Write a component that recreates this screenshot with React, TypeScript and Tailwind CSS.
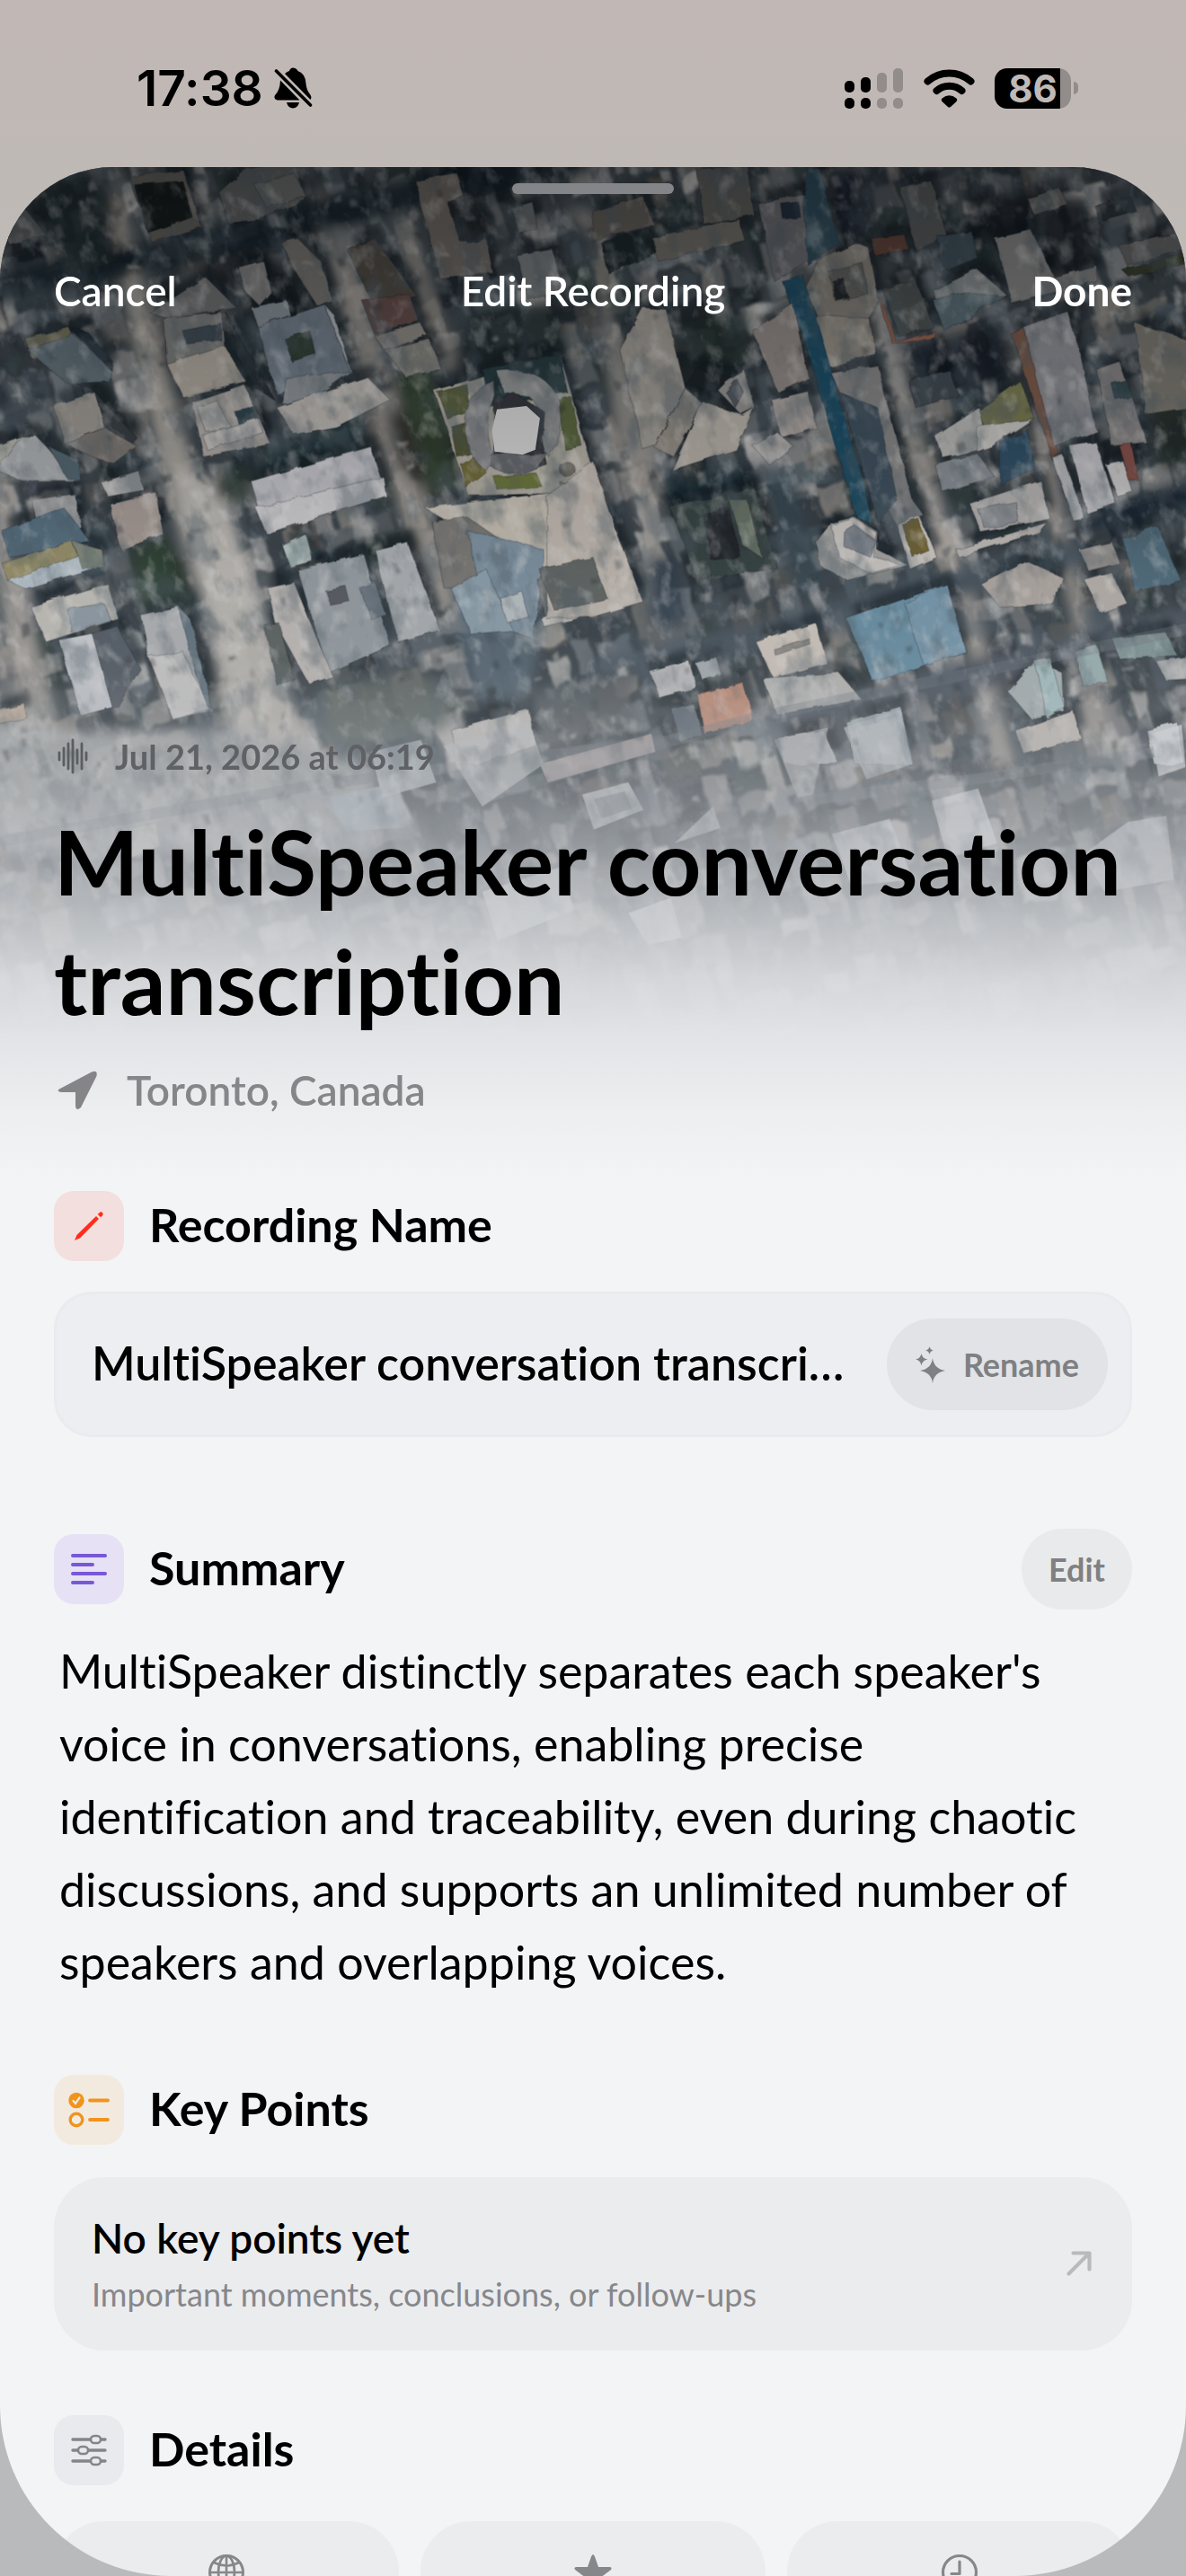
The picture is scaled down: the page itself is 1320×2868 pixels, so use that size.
import type { ReactNode } from "react";
import { GoArrowUpRight } from "react-icons/go";

/* ---------- Satellite map drawing ---------- */

function makeRandom(seed: number) {
  let s = seed;
  return () => {
    s = (s * 1664525 + 1013904223) % 4294967296;
    return s / 4294967296;
  };
}

type Block = { x: number; y: number; w: number; h: number; fill: string; o: number };

const tones = [
  "#7f8081", "#9a9896", "#666b6f", "#454e55", "#262e34", "#1a2228", "#aeacaa",
  "#8c8781", "#4c5962", "#343d43", "#727a81", "#bab7b5", "#5c5751", "#2c3838",
];

function makeBlocks(): Block[] {
  const rnd = makeRandom(77);
  const out: Block[] = [];
  for (let y = -200; y < 1650; y += 34) {
    for (let x = -500; x < 1500; x += 34) {
      const tall = rnd() > 0.45;
      out.push({
        x: Math.round(x + rnd() * 18),
        y: Math.round(y + rnd() * 18),
        w: Math.round(tall ? 10 + rnd() * 26 : 22 + rnd() * 36),
        h: Math.round(tall ? 28 + rnd() * 44 : 14 + rnd() * 24),
        fill: tones[Math.floor(rnd() * tones.length)],
        o: Math.round((0.4 + rnd() * 0.5) * 100) / 100,
      });
    }
  }
  return out;
}

function makeSpecks(seed: number, count: number, size: number): Block[] {
  const rnd = makeRandom(seed);
  const out: Block[] = [];
  for (let i = 0; i < count; i++) {
    out.push({
      x: Math.round(-500 + rnd() * 2000),
      y: Math.round(-200 + rnd() * 1850),
      w: Math.round(3 + rnd() * size),
      h: Math.round(3 + rnd() * size * 1.4),
      fill: rnd() > 0.5 ? "#cac8c6" : "#20282e",
      o: Math.round((0.15 + rnd() * 0.35) * 100) / 100,
    });
  }
  return out;
}

const blocks = makeBlocks();
const groundSpecks = makeSpecks(4242, 2200, 9);
const roofSpecks = makeSpecks(913, 1900, 7);

type Shape = [string, string];

/* Roads, shadows and parks that lie under the buildings. */
const groundLeft: Shape[] = [
  ["0,640 40,760 120,1240 200,1568 110,1568 30,1200 0,980", "#a8a39d"],
  ["330,20 400,300 480,620 560,900 640,1200 860,1568 640,1568 560,1180 470,900 390,560 320,200", "#aaa59e"],
  ["480,800 600,830 700,1140 780,1400 900,1568 640,1568 600,1300 520,980", "#c3beb8"],
  ["0,1440 200,1480 640,1480 1000,1568 1000,1800 0,1800", "#a9aaab"],
  ["860,60 960,300 1040,560 1140,900 1220,1160 1170,1180 1060,900 980,600 900,320 830,130", "#96918b"],
  ["1060,40 1180,420 1240,560 1190,560 1120,380 1040,130", "#807d78"],
  ["0,300 400,200 820,100 1568,-60 1568,20 900,180 400,290 0,370", "#16232c"],
  ["0,500 60,640 0,660", "#141e27"],
  ["100,110 230,30 320,60 330,260 200,300", "#1c252b"],
  ["560,280 640,230 760,260 860,380 700,400 640,420", "#1a2128"],
  ["360,1010 470,980 520,1100 500,1180 400,1180", "#2f3f33"],
  ["580,820 670,790 680,860 640,890 590,880", "#2d3a30"],
  ["700,760 860,700 970,640 1000,740 860,800 720,830", "#22343a"],
  ["1050,560 1150,530 1200,700 1210,840 1140,880 1100,760", "#323f2e"],
  ["1030,650 1080,650 1130,800 1110,850 1060,780", "#34332e"],
  ["1230,400 1480,360 1500,500 1200,560", "#1f282a"],
  ["860,1380 1100,1320 1240,1400 1180,1480 940,1530 860,1500", "#5c6360"],
  ["940,1000 1100,960 1130,1000 1000,1040 900,1060", "#2b3430"],
  ["1190,1080 1320,1040 1440,1180 1400,1400 1260,1400", "#536572"],
];

const groundRight: Shape[] = [
  ["-80,120 0,200 60,760 170,1040 160,760 90,500 40,380 0,120", "#918d88"],
  ["720,360 800,520 900,860 1000,1150 1100,1568 1030,1568 960,1200 860,900 770,600", "#a39d98"],
  ["1080,440 1200,800 1280,1150 1360,1568 1290,1568 1250,1200 1150,800", "#9a938d"],
  ["1240,930 1568,820 1568,900 1260,990", "#18242f"],
  ["440,780 520,820 600,1100 540,1140 470,960", "#34444f"],
  ["170,830 420,790 430,850 190,900", "#18272f"],
  ["200,400 400,380 420,540 240,570", "#1f2527"],
  ["150,1030 210,1030 240,1220 150,1200", "#2c3946"],
  ["0,1290 420,1200 900,1070 1240,980 1300,1040 800,1180 400,1290 0,1370", "#46525d"],
  ["460,1430 1000,1290 1568,1150 1568,1220 1000,1380 480,1480", "#4d5560"],
  ["-200,1400 100,1330 120,1470 -150,1540", "#565b5e"],
  ["790,490 1060,420 1080,570 960,610 860,560", "#131d28"],
  ["600,20 700,20 720,200 650,220", "#131f29"],
  ["960,60 1300,100 1300,260 1180,290 1000,200", "#191f24"],
  ["1440,640 1568,600 1568,820 1480,790", "#202a26"],
];

const buildingsLeft: Shape[] = [
  ["360,40 500,20 550,170 420,210", "#5d5b58"],
  ["375,60 500,50 525,145 410,185", "#191b1d"],
  ["595,80 660,20 790,0 820,100 700,150 620,160", "#5a5c5d"],
  ["686,60 790,30 822,90 720,122", "#666767"],
  ["20,150 80,110 145,190 50,215", "#54585a"],
  ["1105,50 1215,32 1232,90 1190,105 1240,210 1290,200 1308,290 1170,305", "#67645f"],
  ["1190,110 1240,90 1300,180 1225,210", "#22272b"],
  ["1370,245 1462,228 1490,330 1400,360", "#707477"],
  ["1355,120 1410,105 1425,175 1375,185", "#63676b"],
  ["930,230 1000,200 1110,350 1000,380", "#4b4743"],
  ["965,360 1090,345 1115,415 1000,450", "#5d4846"],
  ["1000,455 1120,420 1135,450 1025,490", "#84817b"],
  ["1025,490 1140,460 1175,540 1080,560", "#7a7a75"],
  ["755,210 800,200 860,260 890,360 850,375 790,280", "#6e6d6b"],
  ["645,275 710,258 730,340 700,375 665,340", "#787777"],
  ["90,460 205,432 240,510 110,515", "#6d6a56"],
  ["95,490 215,450 315,530 310,572 200,578", "#5d6a72"],
  ["205,432 250,440 318,520 315,545", "#1d262e"],
  ["415,395 560,300 640,380 470,410", "#68696a"],
  ["450,410 600,392 612,510 460,528", "#737474"],
  ["500,440 600,420 600,465 510,475", "#3b4750"],
  ["460,528 610,480 665,572 500,612", "#a19b92"],
  ["612,390 740,620 690,590 640,500", "#252d34"],
  ["678,380 770,360 780,400 695,430", "#7d868c"],
  ["695,430 870,372 935,545 745,605", "#6c7783"],
  ["765,460 832,440 845,498 782,518", "#2e3a33"],
  ["870,372 895,400 940,550 935,545", "#a0a5aa"],
  ["770,565 940,545 850,610 760,632", "#858a8f"],
  ["745,640 980,560 1040,620 900,690 790,710", "#aeaaa6"],
  ["163,635 272,600 300,695 195,735", "#928e89"],
  ["272,600 382,720 365,735 300,695", "#343a3f"],
  ["195,735 300,695 382,740 320,785 270,770", "#75706c"],
  ["525,625 660,580 730,735 555,768", "#a09d99"],
  ["540,640 590,622 625,690 560,702", "#b2afac"],
  ["635,650 690,640 702,668 645,682", "#2e3f49"],
  ["550,712 695,668 710,705 565,752", "#b5b2b0"],
  ["0,745 80,715 110,790 20,808", "#a9a89f"],
  ["80,715 120,715 230,830 75,830 15,800", "#a0a3a6"],
  ["150,740 230,780 235,830 200,825", "#50616b"],
  ["678,832 990,742 1030,870 718,968", "#b4b4b9"],
  ["690,900 1022,820 1030,870 718,968", "#c0bfc2"],
  ["288,835 385,805 400,855 305,872", "#a5a5a6"],
  ["310,890 430,860 450,970 340,1010", "#9b918c"],
  ["108,880 220,865 235,950 130,985", "#8d8f91"],
  ["30,960 190,900 260,990 50,1030", "#526a7a"],
  ["30,1045 215,990 240,1060 45,1090", "#8f8865"],
  ["45,1090 240,1020 298,1050 90,1112", "#aab5bd"],
  ["215,990 290,1010 298,1055 240,1060", "#7c8378"],
  ["105,1158 305,1098 333,1190 145,1250", "#b7b5af"],
  ["200,1165 295,1150 315,1195 210,1225", "#87939d"],
  ["178,1245 265,1228 318,1420 235,1442", "#bcbfc4"],
  ["265,1228 330,1210 390,1320 330,1420 318,1420", "#50565f"],
  ["390,1180 490,1158 575,1430 475,1450 412,1290", "#a6a8ab"],
  ["490,1158 520,1190 578,1430 560,1430", "#5c6d78"],
  ["412,1290 500,1275 570,1425 475,1452", "#bfbebe"],
  ["760,1000 820,970 838,1040 780,1055", "#adbab7"],
  ["800,1065 970,1020 1040,1260 880,1330", "#8d9499"],
  ["870,1115 925,1105 935,1145 885,1155", "#53575c"],
  ["1000,1010 1085,990 1170,1220 1060,1250", "#a1a5a8"],
  ["960,1110 1000,1095 1030,1180 990,1190", "#67727b"],
  ["720,1110 790,1095 890,1340 830,1360 740,1200", "#b4b0ad"],
  ["712,1205 750,1200 790,1345 750,1368", "#575d5c"],
  ["1155,595 1480,500 1568,800 1568,860 1245,870", "#a6a298"],
  ["1165,600 1240,580 1250,650 1190,670", "#555b3c"],
  ["1200,690 1235,680 1250,760 1215,770", "#4d5135"],
  ["1225,790 1270,760 1290,810 1240,850", "#6b6537"],
  ["1310,820 1420,810 1435,845 1320,855", "#66703a"],
  ["1480,620 1510,610 1540,740 1495,750", "#55603e"],
  ["1280,540 1480,500 1500,600 1300,640", "#26393d"],
  ["1130,900 1568,850 1568,1060 1430,1080 1300,1010", "#b7b1a7"],
  ["1150,940 1240,925 1350,1000 1290,1110 1180,1110", "#75736f"],
  ["1240,960 1330,980 1440,1010 1440,1070 1410,1240 1290,1200", "#778997"],
  ["1200,1110 1290,1060 1360,1220 1250,1230", "#8496a2"],
  ["1325,1135 1380,1115 1400,1185 1345,1200", "#aeb5b9"],
  ["1425,1090 1568,1055 1568,1150 1440,1180", "#5e6462"],
  ["1430,1185 1568,1150 1568,1180 1440,1210", "#bdbab6"],
  ["1200,1480 1400,1425 1420,1520 1260,1568 1210,1568", "#b9b6b3"],
  ["15,1430 90,1412 95,1448 25,1462", "#b9a796"],
];

const buildingsRight: Shape[] = [
  ["270,20 400,10 420,140 290,165", "#5a5a58"],
  ["430,110 560,80 640,210 470,310", "#65666a"],
  ["555,20 590,20 642,215 560,270 545,100", "#2f4a58"],
  ["490,110 535,105 540,145 495,150", "#222f3c"],
  ["0,130 130,90 160,165 0,205", "#5d5a57"],
  ["150,200 380,150 395,205 170,260", "#6b6864"],
  ["20,210 150,170 165,240 40,290", "#1c2529"],
  ["590,255 685,213 718,225 745,365 720,410 600,440 552,330", "#7b7872"],
  ["612,285 700,262 715,345 630,362", "#5f5d59"],
  ["622,310 650,300 665,352 632,360", "#23282c"],
  ["580,400 720,410 735,500 600,540 570,480", "#8b867e"],
  ["490,310 545,295 590,440 700,820 728,945 690,930 630,740 550,460", "#1f4a61"],
  ["620,550 740,530 830,880 860,920 790,950 740,850 650,620", "#7b7b7d"],
  ["640,600 740,640 790,880 740,940 680,720", "#3b4c58"],
  ["725,200 810,190 820,225 735,245", "#5c4039"],
  ["800,70 880,50 920,190 840,230", "#535556"],
  ["895,195 985,182 1000,250 905,290", "#3d4c55"],
  ["885,335 1000,280 1075,345 915,440", "#7e8385"],
  ["885,360 960,340 1070,350 915,442", "#56696f"],
  ["1045,200 1140,178 1200,300 1310,270 1310,310 1090,370", "#7b7b7b"],
  ["1130,95 1215,70 1235,110 1150,138", "#636363"],
  ["1305,115 1400,90 1415,130 1315,158", "#2a3138"],
  ["1370,220 1545,180 1550,225 1390,270", "#605f5f"],
  ["1375,280 1550,235 1555,260 1395,300", "#343a2b"],
  ["750,355 790,470 890,440 888,455 782,478 748,375", "#8b5e4c"],
  ["755,330 840,310 888,430 795,455", "#4a4d4d"],
  ["1090,450 1120,430 1210,750 1195,775", "#745447"],
  ["1120,430 1235,390 1270,510 1310,700 1200,740", "#84858a"],
  ["70,490 130,380 190,385 240,590 160,740 130,750", "#96928c"],
  ["240,590 285,630 210,768 160,745", "#8a847d"],
  ["285,625 390,660 420,640 372,750 205,803", "#a8a39c"],
  ["320,590 395,543 420,640 385,658", "#8c8a88"],
  ["345,600 375,565 392,600 370,640", "#4e545c"],
  ["240,580 320,600 360,560 270,540", "#1b2227"],
  ["465,620 560,598 580,690 490,718", "#a19a97"],
  ["415,440 520,370 560,560 480,600", "#87817e"],
  ["415,740 480,705 520,740 460,790", "#a5a2a0"],
  ["820,570 930,545 950,610 840,640", "#3c454d"],
  ["1000,650 1110,570 1150,670 1020,690", "#72724f"],
  ["890,715 1005,640 1030,745 910,772", "#a8a8a6"],
  ["1000,690 1145,670 1040,740 1000,755", "#b8b6b3"],
  ["1060,730 1130,700 1150,800 1060,840", "#2f4c61"],
  ["890,790 1000,760 1045,820 910,860", "#7e848a"],
  ["980,890 1165,830 1190,930 1010,965", "#a7a5a4"],
  ["1000,905 1100,885 1110,940 1020,955", "#85888d"],
  ["945,1010 1180,940 1160,965 950,1028", "#b3afab"],
  ["1195,770 1220,760 1280,930 1250,935", "#a7a8ab"],
  ["1240,740 1310,730 1360,890 1285,915", "#b0b0b4"],
  ["1335,790 1380,780 1405,860 1365,872", "#b9b7b7"],
  ["1370,740 1400,730 1420,830 1395,830", "#7b4c44"],
  ["1310,540 1370,520 1440,730 1350,740", "#7c7a7a"],
  ["1350,580 1390,570 1400,610 1360,620", "#30444c"],
  ["1410,420 1540,460 1568,640 1440,660", "#737069"],
  ["200,900 420,850 480,1060 270,1085", "#36403f"],
  ["285,920 355,900 385,1030 310,1040", "#23252b"],
  ["355,880 400,880 440,1030 390,1000", "#626c61"],
  ["580,990 620,940 680,925 742,965 740,1010 820,1050 660,1090 590,1050", "#9a9a99"],
  ["620,945 680,928 740,968 730,1030 800,1050 720,1072 640,1030", "#bcb9b6"],
  ["652,962 680,945 740,990 722,1030 650,1000", "#7d828a"],
  ["790,945 850,922 895,1030 825,1060", "#c0bcb6"],
  ["805,945 848,930 872,1010 830,1028", "#6d5f31"],
  ["-120,870 0,780 60,960 130,1145 0,1185 -120,1190", "#b3aca5"],
  ["-140,1060 0,1030 40,1140 -100,1170", "#5b615e"],
  ["660,1190 920,1100 970,1275 730,1355", "#64889c"],
  ["810,1150 920,1100 970,1275 860,1310", "#7090a4"],
  ["425,1250 580,1200 610,1305 470,1345", "#c4bcb4"],
  ["470,1268 560,1240 565,1255 475,1285", "#8a8680"],
  ["148,1328 250,1300 270,1370 172,1395", "#b2b2b4"],
  ["265,1305 320,1290 335,1335 285,1350", "#9ea4a9"],
  ["272,1390 390,1355 418,1455 290,1490", "#b98671"],
  ["205,1425 260,1410 285,1495 225,1510", "#5b6670"],
  ["1080,1380 1150,1300 1220,1330 1225,1430 1140,1450", "#9fa9ab"],
  ["1150,1300 1190,1292 1225,1420 1180,1450", "#9fb8ba"],
  ["1255,1275 1310,1258 1340,1355 1275,1365", "#94a9ab"],
  ["1350,1240 1490,1225 1520,1285 1370,1295", "#7c9091"],
  ["1465,1300 1568,1285 1568,1345 1490,1350", "#b0b0b0"],
  ["1380,980 1470,950 1530,1090 1410,1120", "#4d6675"],
  ["1010,1100 1130,1040 1220,1080 1200,1150 1060,1160", "#a59e99"],
  ["1280,1090 1350,1070 1390,1150 1320,1175", "#aca6a1"],
  ["1265,1010 1350,990 1370,1045 1290,1065", "#8b8886"],
  ["1100,1480 1250,1430 1270,1500 1120,1540", "#b8b2ac"],
  ["440,1345 640,1330 700,1400 480,1440", "#aeaeac"],
  ["660,1460 800,1418 830,1568 680,1568", "#98a4ab"],
  ["680,1475 790,1445 815,1568 700,1568", "#b7b9ba"],
  ["480,1500 600,1480 640,1568 500,1568", "#adb0b3"],
  ["1440,1480 1520,1460 1540,1568 1460,1568", "#c1c3c6"],
];

/* The strip of city that fades out beneath the heading. */
const buildingsLower: Shape[] = [
  ["590,60 700,-20 720,120 640,260", "#b9babb"],
  ["715,120 860,20 865,80 725,180", "#b4a9a9"],
  ["440,230 530,180 540,330 460,340", "#9cabb5"],
  ["495,80 560,40 580,180 510,230", "#b7bfc4"],
  ["770,220 830,180 850,270 785,335", "#c6cacd"],
  ["785,235 825,210 835,265 795,300", "#90979d"],
  ["1110,0 1185,-60 1200,120 1140,170", "#aeb5ba"],
  ["1225,240 1285,200 1310,380 1245,430", "#dcdfe3"],
  ["1095,350 1170,300 1200,500 1120,520", "#d0d2d3"],
  ["1020,40 1090,0 1070,220 1050,230", "#a6a7a9"],
  ["890,380 940,260 950,330", "#b9bab9"],
  ["1420,420 1480,310 1530,290 1540,500 1450,540", "#b5b9bd"],
  ["1510,20 1550,-10 1555,130 1520,160", "#d7d9dc"],
  ["170,340 215,315 220,390 180,430", "#c1bfb5"],
  ["640,540 740,460 760,600 660,700", "#c6c9cc"],
  ["830,610 885,560 900,690 855,715", "#d7d8da"],
];

const outlinesLower: string[] = [
  "640,230 860,60 1010,-40 1568,-330",
  "0,380 420,190 880,40",
  "1060,240 1280,170 1568,60",
];

function Shapes({ items }: { items: Shape[] }) {
  return (
    <>
      {items.map(([points, fill], i) => (
        <polygon key={i} points={points} fill={fill} />
      ))}
    </>
  );
}

/* Each roof throws a short shadow up the slope of the street grid. */
function Shadows({ items }: { items: Shape[] }) {
  return (
    <g transform="translate(12 -34)" fill="#10181f">
      {items.map(([points], i) => (
        <polygon key={i} points={points} />
      ))}
    </g>
  );
}

function Rects({ items }: { items: Block[] }) {
  return (
    <g transform="rotate(-15 660 500)">
      {items.map((b, i) => (
        <rect key={i} x={b.x} y={b.y} width={b.w} height={b.h} fill={b.fill} opacity={b.o} />
      ))}
    </g>
  );
}

function SatelliteMap() {
  return (
    <svg
      className="absolute inset-0 size-full"
      viewBox="0 0 1320 1110"
      preserveAspectRatio="xMidYMin slice"
      aria-hidden="true"
    >
      <defs>
        <filter id="dark-grain" x="0" y="0" width="100%" height="100%">
          <feTurbulence type="fractalNoise" baseFrequency="0.035 0.022" numOctaves="4" seed="8" />
          <feColorMatrix values="0 0 0 0 0.07  0 0 0 0 0.1  0 0 0 0 0.12  4 0 0 0 -1.9" />
        </filter>
        <filter id="light-grain" x="0" y="0" width="100%" height="100%">
          <feTurbulence type="fractalNoise" baseFrequency="0.05 0.035" numOctaves="4" seed="21" />
          <feColorMatrix values="0 0 0 0 0.76  0 0 0 0 0.75  0 0 0 0 0.74  3.4 0 0 0 -1.8" />
        </filter>
        <filter id="rough" x="-2%" y="-2%" width="104%" height="104%">
          <feTurbulence type="fractalNoise" baseFrequency="0.04" numOctaves="2" seed="3" result="n" />
          <feDisplacementMap in="SourceGraphic" in2="n" scale="14" />
          <feGaussianBlur stdDeviation="1.4" />
        </filter>
        <filter id="edge" x="-2%" y="-2%" width="104%" height="104%">
          <feTurbulence type="fractalNoise" baseFrequency="0.05" numOctaves="2" seed="11" result="n" />
          <feDisplacementMap in="SourceGraphic" in2="n" scale="6" />
          <feGaussianBlur stdDeviation="0.6" />
        </filter>
        <filter id="shadow-blur">
          <feGaussianBlur stdDeviation="3" />
        </filter>
        <filter id="soft">
          <feGaussianBlur stdDeviation="7" />
        </filter>
        <linearGradient id="shade" x1="0" y1="0" x2="0" y2="1">
          <stop offset="0" stopColor="#000" stopOpacity="0.36" />
          <stop offset="0.2" stopColor="#000" stopOpacity="0.16" />
          <stop offset="0.4" stopColor="#000" stopOpacity="0" />
        </linearGradient>
        <linearGradient id="fade" x1="0" y1="0" x2="0" y2="1">
          <stop offset="0.38" stopColor="#b4b8bc" stopOpacity="0" />
          <stop offset="0.5" stopColor="#b6b9bd" stopOpacity="0.12" />
          <stop offset="0.59" stopColor="#b9bcc0" stopOpacity="0.42" />
          <stop offset="0.67" stopColor="#c2c4c8" stopOpacity="0.68" />
          <stop offset="0.74" stopColor="#cfd1d4" stopOpacity="0.86" />
          <stop offset="0.8" stopColor="#dadbde" stopOpacity="0.96" />
          <stop offset="0.86" stopColor="#e3e4e7" stopOpacity="1" />
          <stop offset="0.93" stopColor="#edeef0" />
          <stop offset="1" stopColor="#f3f4f6" />
        </linearGradient>
      </defs>
      <rect width="1320" height="1110" fill="#3a4248" />
      <g filter="url(#rough)">
        <Rects items={blocks} />
      </g>
      <g filter="url(#soft)" opacity="0.85">
        <g transform="translate(0 -6) scale(0.4209)">
          <Shapes items={groundLeft} />
        </g>
        <g transform="translate(660 -6) scale(0.4209)">
          <Shapes items={groundRight} />
        </g>
      </g>
      <g filter="url(#rough)">
        <Rects items={groundSpecks} />
      </g>
      <g filter="url(#shadow-blur)" opacity="0.55">
        <g transform="translate(0 -6) scale(0.4209)">
          <Shadows items={buildingsLeft} />
        </g>
        <g transform="translate(660 -6) scale(0.4209)">
          <Shadows items={buildingsRight} />
        </g>
      </g>
      <g filter="url(#edge)" stroke="#171d22" strokeOpacity="0.25" strokeWidth="3">
        <g transform="translate(0 -6) scale(0.4209)">
          <Shapes items={buildingsLeft} />
          <path
            d="M1310 570 Q1235 600 1235 690 Q1240 770 1290 805 L1310 770 Q1275 690 1312 620 Z"
            fill="#7d7f82"
          />
          <path
            d="M1320 545 Q1440 530 1480 620 Q1500 700 1455 770 L1430 740 Q1450 650 1400 610 L1335 600 Z"
            fill="#898a8b"
          />
          <path d="M1312 620 L1360 600 L1440 650 L1435 720 L1450 790 Q1380 820 1305 790 Z" fill="#33363a" />
          <path d="M1300 760 L1450 760 Q1430 808 1380 812 Q1320 812 1300 790 Z" fill="#606468" />
          <circle cx="1500" cy="800" r="20" fill="#625d55" />
          <path d="M1480 835 Q1568 850 1568 900" fill="none" stroke="#77726b" strokeOpacity="1" strokeWidth="9" />
        </g>
        <g transform="translate(660 -6) scale(0.4209)">
          <Shapes items={buildingsRight} />
        </g>
      </g>
      <g transform="translate(0 614) scale(0.8418 0.3333)" opacity="0.75">
        <g fill="none" stroke="#6b737b" strokeOpacity="0.5" strokeWidth="34">
          {outlinesLower.map((points) => (
            <polyline key={points} points={points} />
          ))}
        </g>
        <Shapes items={buildingsLower} />
      </g>
      <g filter="url(#rough)" opacity="0.7">
        <Rects items={roofSpecks} />
      </g>
      <g transform="rotate(-16 660 500)">
        <rect x="-300" y="-300" width="1920" height="1700" filter="url(#dark-grain)" opacity="0.4" />
        <rect x="-300" y="-300" width="1920" height="1700" filter="url(#light-grain)" opacity="0.3" />
      </g>
      <path
        d="M1318 645 L1395 636 L1430 668 L1418 750 L1385 763 L1312 755 L1305 700 Z"
        transform="translate(0 -6) scale(0.4209)"
        fill="#c6c6c7"
      />
      <rect width="1320" height="1110" fill="url(#shade)" />
      <rect width="1320" height="1110" fill="url(#fade)" />
    </svg>
  );
}

/* ---------- Icons ---------- */

function BellOff() {
  return (
    <svg className="h-[46px] w-[43px]" viewBox="0 0 43 46" aria-hidden="true">
      <path d="M12 7Q15 4.500 17 4Q18 0.500 21 0.500Q25 0.500 26.500 4Q35 7 35.500 18Q36 25 40 30Q42.500 33 40.500 36Z" />
      <path d="M7 14.500L28.500 36.500H3.500Q-1 35 1 31Q6.500 26 7 14.500Z" />
      <path d="M14 39H28Q26.500 45 21 45.500Q15.500 45 14 39Z" />
      <path d="M2.500 4L40.500 42" stroke="#000" strokeWidth="3.600" strokeLinecap="round" />
    </svg>
  );
}

function Signal() {
  return (
    <svg className="h-[45px] w-[66px]" viewBox="0 0 66 45" aria-hidden="true">
      <rect x="0" y="14" width="11" height="13" rx="5" />
      <rect x="18" y="10" width="11" height="17" rx="5" />
      <g fill="#928c8a">
        <rect x="36" y="5" width="11" height="22" rx="5" />
        <rect x="54" y="0" width="11" height="27" rx="5" />
        <rect x="36" y="33" width="11" height="12" rx="5" />
        <rect x="54" y="33" width="11" height="12" rx="5" />
      </g>
      <rect x="0" y="33" width="11" height="12" rx="5" />
      <rect x="18" y="33" width="11" height="12" rx="5" />
    </svg>
  );
}

function Wifi() {
  return (
    <svg className="h-[43px] w-[57px]" viewBox="0 0 57 43" aria-hidden="true">
      <g fill="none" stroke="#000" strokeWidth="8" strokeLinecap="round">
        <path d="M4.500 13.500Q15 4.500 28.500 4.500Q42 4.500 52.500 13.500" />
        <path d="M14.500 24Q20.500 18.800 28.500 18.800Q36.500 18.800 42.500 24" />
      </g>
      <path d="M20.500 32.500Q28.500 26 36.500 32.500Q38 34.500 36 36.500L30 42Q28.500 43.200 27 42L21 36.500Q19 34.500 20.500 32.500Z" />
    </svg>
  );
}

function Battery() {
  return (
    <div className="flex items-center gap-[3px]">
      <div className="flex h-[45px] w-[85px] items-center justify-center rounded-[14px] bg-linear-to-r from-black from-86% to-[#928c8a] to-86% text-[42px] leading-[45px] font-bold text-[#c0bab7] font-[Inter]">
        86
      </div>
      <div className="h-[14px] w-[5px] rounded-r-full bg-[#928c8a]" />
    </div>
  );
}

function Waveform() {
  return (
    <svg className="h-[40px] w-[36px]" viewBox="0 0 36 40" aria-hidden="true">
      <path
        d="M2 16V24M7 11V30M12 6V34M17 2V38M22 13V28M27 6V34M32 16V24"
        stroke="#5b5d61"
        strokeWidth="2.800"
        strokeLinecap="round"
      />
    </svg>
  );
}

function LocationArrow() {
  return (
    <svg className="h-[44px] w-[45px]" viewBox="0 0 45 44" aria-hidden="true">
      <path
        d="M2 20.500L38 1.500Q45 -1 43.500 6L26 41Q20.500 46 20 39V24H4Q-1.500 23 2 20.500Z"
        fill="#858589"
      />
    </svg>
  );
}

function Pencil() {
  return (
    <svg className="size-[36px]" viewBox="0 0 36 36" fill="#ff2d1a" aria-hidden="true">
      <path d="M2 34L4.500 28L26 7L29 10L8 31.500Z" />
      <path d="M27.800 5L29.800 3Q31.500 1.500 33 3Q34.500 4.500 33 6.200L31 8.200Z" />
    </svg>
  );
}

function SummaryLines() {
  return (
    <svg className="h-[36px] w-[40px]" viewBox="0 0 40 36" aria-hidden="true">
      <path d="M2 3H38M2 13H24M2 23H38M2 33H24" stroke="#7857d8" strokeWidth="4" strokeLinecap="round" />
    </svg>
  );
}

function Checklist() {
  return (
    <svg className="h-[40px] w-[46px]" viewBox="0 0 46 40" aria-hidden="true">
      <g stroke="#f0941d" strokeWidth="3.800" strokeLinecap="round">
        <path d="M24 9.500H44M24 31H44" />
        <circle cx="9" cy="31" r="6.800" fill="none" strokeWidth="3.400" />
      </g>
      <circle cx="9" cy="9.500" r="8.700" fill="#f0941d" />
      <path d="M5.500 10L8 13L12.500 6.500" fill="none" stroke="#f2eadf" strokeWidth="2.200" strokeLinecap="round" />
    </svg>
  );
}

function Sliders() {
  return (
    <svg className="h-[36px] w-[40px]" viewBox="0 0 40 36" aria-hidden="true">
      <g stroke="#858589" strokeWidth="3.400" strokeLinecap="round">
        <path d="M2 6H38M2 18H38M2 30H38" />
      </g>
      <g fill="#e9eaed" stroke="#858589" strokeWidth="2.600">
        <rect x="22" y="2" width="11" height="8" rx="4" />
        <rect x="8" y="14" width="11" height="8" rx="4" />
        <rect x="22" y="26" width="11" height="8" rx="4" />
      </g>
    </svg>
  );
}

function Sparkles() {
  return (
    <svg className="h-[41px] w-[33px]" viewBox="0 0 33 41" fill="#7f8083" aria-hidden="true">
      <path d="M19 13Q20.500 25 33 27Q20.500 29 19 41Q17.500 29 5 27Q17.500 25 19 13Z" />
      <path d="M6.500 8Q7.500 13.500 13.500 14.500Q7.500 15.500 6.500 21.500Q5.500 15.500 0 14.500Q5.500 13.500 6.500 8Z" />
      <path d="M15.500 0Q16.200 3.800 20 4.500Q16.200 5.200 15.500 9Q14.800 5.200 11 4.500Q14.800 3.800 15.500 0Z" />
    </svg>
  );
}

function Globe() {
  return (
    <svg className="size-[42px]" viewBox="0 0 42 42" fill="none" stroke="#85878a" strokeWidth="2.600" aria-hidden="true">
      <circle cx="21" cy="21" r="18.500" strokeWidth="3" />
      <ellipse cx="21" cy="21" rx="9" ry="18.500" />
      <path d="M21 2V40M2 21H40M7 10Q21 17 35 10M7 32Q21 25 35 32" />
    </svg>
  );
}

function Star() {
  return (
    <svg className="size-[44px]" viewBox="0 0 44 44" fill="#85878a" aria-hidden="true">
      <path d="M22 1Q23 1 24 3.500L28 15H41Q43.500 15.500 42 18L32 25.500L36 38Q36.500 41.500 33 40L22 32.500L11 40Q7.500 41.500 8 38L12 25.500L2 18Q0.500 15.500 3 15H16L20 3.500Q21 1 22 1Z" />
    </svg>
  );
}

function Clock() {
  return (
    <svg className="size-[42px]" viewBox="0 0 42 42" fill="none" stroke="#85878a" strokeWidth="3.200" aria-hidden="true">
      <circle cx="21" cy="21" r="18.500" />
      <path d="M21 9V22.500H12" strokeLinecap="round" strokeLinejoin="round" />
    </svg>
  );
}

/* ---------- Page parts ---------- */

function StatusBar() {
  return (
    <header className="flex h-[186px] shrink-0 items-center justify-between pt-[10px] pr-[120px] pl-[152px]">
      <div className="flex items-center gap-3">
        <time className="text-[55px] leading-none font-semibold font-[Inter]">17:38</time>
        <BellOff />
      </div>
      <div className="flex items-center gap-[22px]">
        <Signal />
        <Wifi />
        <Battery />
      </div>
    </header>
  );
}

function SectionTitle({ icon, tint, children }: { icon: ReactNode; tint: string; children: ReactNode }) {
  return (
    <div className="flex items-center gap-7">
      <div className={`flex size-[78px] items-center justify-center rounded-[22px] ${tint}`}>{icon}</div>
      <h2 className="pb-1 text-[52px] leading-none font-bold">{children}</h2>
    </div>
  );
}

function DetailCard({ label, children }: { label: string; children: ReactNode }) {
  return (
    <button
      type="button"
      aria-label={label}
      className="flex h-48 flex-1 items-start justify-center rounded-[56px] bg-[#ebecee] pt-9"
    >
      {children}
    </button>
  );
}

function Hero() {
  return (
    <section className="relative">
      <SatelliteMap />
      <div className="relative px-15 pt-[18px]">
        <div className="mx-auto h-3 w-[180px] rounded-full bg-[#838588]" />
        <nav className="mt-[76px] grid h-16 grid-cols-3 items-center text-[46px] leading-none font-semibold text-white">
          <button type="button" className="justify-self-start">Cancel</button>
          <h2 className="justify-self-center whitespace-nowrap">Edit Recording</h2>
          <button type="button" className="justify-self-end font-bold">Done</button>
        </nav>
        <div className="mt-[462px] flex items-center gap-7 px-1 text-[38px] leading-[48px] font-bold text-[#5f6165]">
          <Waveform />
          <time>Jul 21, 2026 at 06:19</time>
        </div>
        <h1 className="mt-[26px] text-[100px] leading-[133px] font-bold">MultiSpeaker conversation transcription</h1>
        <div className="mt-7 flex items-center gap-8 px-1 pb-18 text-[46px] leading-[56px] font-semibold text-[#86868a]">
          <LocationArrow />
          <span>Toronto, Canada</span>
        </div>
      </div>
    </section>
  );
}

export default function App() {
  return (
    <div className="flex h-screen flex-col overflow-hidden bg-linear-to-b from-[#c1b7b4] via-[#bebab6] via-10% to-[#b9babc] font-[Lato,sans-serif] text-black [font-variant-ligatures:none]">
      <StatusBar />
      <main className="min-h-0 flex-1 overflow-y-auto rounded-t-[126px] rounded-b-[190px] bg-[#f3f4f6] [scrollbar-width:none]">
        <Hero />
        <div className="flex flex-col px-15 pt-3">
          <SectionTitle icon={<Pencil />} tint="bg-[#f3dfde]">Recording Name</SectionTitle>
          <div className="mt-[34px] flex h-[162px] items-center gap-8 rounded-[42px] border-[3px] border-[#eaebee] bg-[#edeef2] pr-6 pl-[39px]">
            <input
              aria-label="Recording name"
              defaultValue="MultiSpeaker conversation transcription"
              className="min-w-0 flex-1 bg-transparent pb-1 text-[52px] leading-[72px] font-semibold text-ellipsis outline-none"
            />
            <button
              type="button"
              className="flex h-[102px] items-center gap-5 rounded-full bg-[#e2e3e6] px-8 text-[36px] leading-none font-bold text-[#7f8083]"
            >
              <Sparkles />
              Rename
            </button>
          </div>

          <div className="mt-[102px] flex items-center justify-between">
            <SectionTitle icon={<SummaryLines />} tint="bg-[#e6e1f5]">Summary</SectionTitle>
            <button
              type="button"
              className="h-[90px] rounded-full bg-[#e9eaec] px-[30px] text-[36px] leading-none font-bold text-[#7f8083]"
            >
              Edit
            </button>
          </div>
          <p className="mt-7 px-[6px] text-[52px] leading-[81px]">
            MultiSpeaker distinctly separates each speaker's voice in conversations, enabling precise identification and
            traceability, even during chaotic discussions, and supports an unlimited number of speakers and overlapping
            voices.
          </p>

          <div className="mt-[85px]">
            <SectionTitle icon={<Checklist />} tint="bg-[#f3eadf]">Key Points</SectionTitle>
          </div>
          <button
            type="button"
            className="mt-9 flex h-[193px] items-center justify-between rounded-[56px] bg-[#ebecee] pr-9 pl-[42px] text-left"
          >
            <span className="flex flex-col">
              <span className="text-[46px] leading-[66px] font-semibold">No key points yet</span>
              <span className="text-[36px] leading-[58px] text-[#86878b]">
                Important moments, conclusions, or follow-ups
              </span>
            </span>
            <GoArrowUpRight className="size-[48px] text-[#b9babc]" strokeWidth="0.6" aria-hidden="true" />
          </button>

          <div className="mt-[72px]">
            <SectionTitle icon={<Sliders />} tint="bg-[#e9eaed]">Details</SectionTitle>
          </div>
          <div className="mt-10 flex gap-6">
            <DetailCard label="Language"><Globe /></DetailCard>
            <DetailCard label="Favorite"><Star /></DetailCard>
            <DetailCard label="Time"><Clock /></DetailCard>
          </div>
        </div>
      </main>
    </div>
  );
}
